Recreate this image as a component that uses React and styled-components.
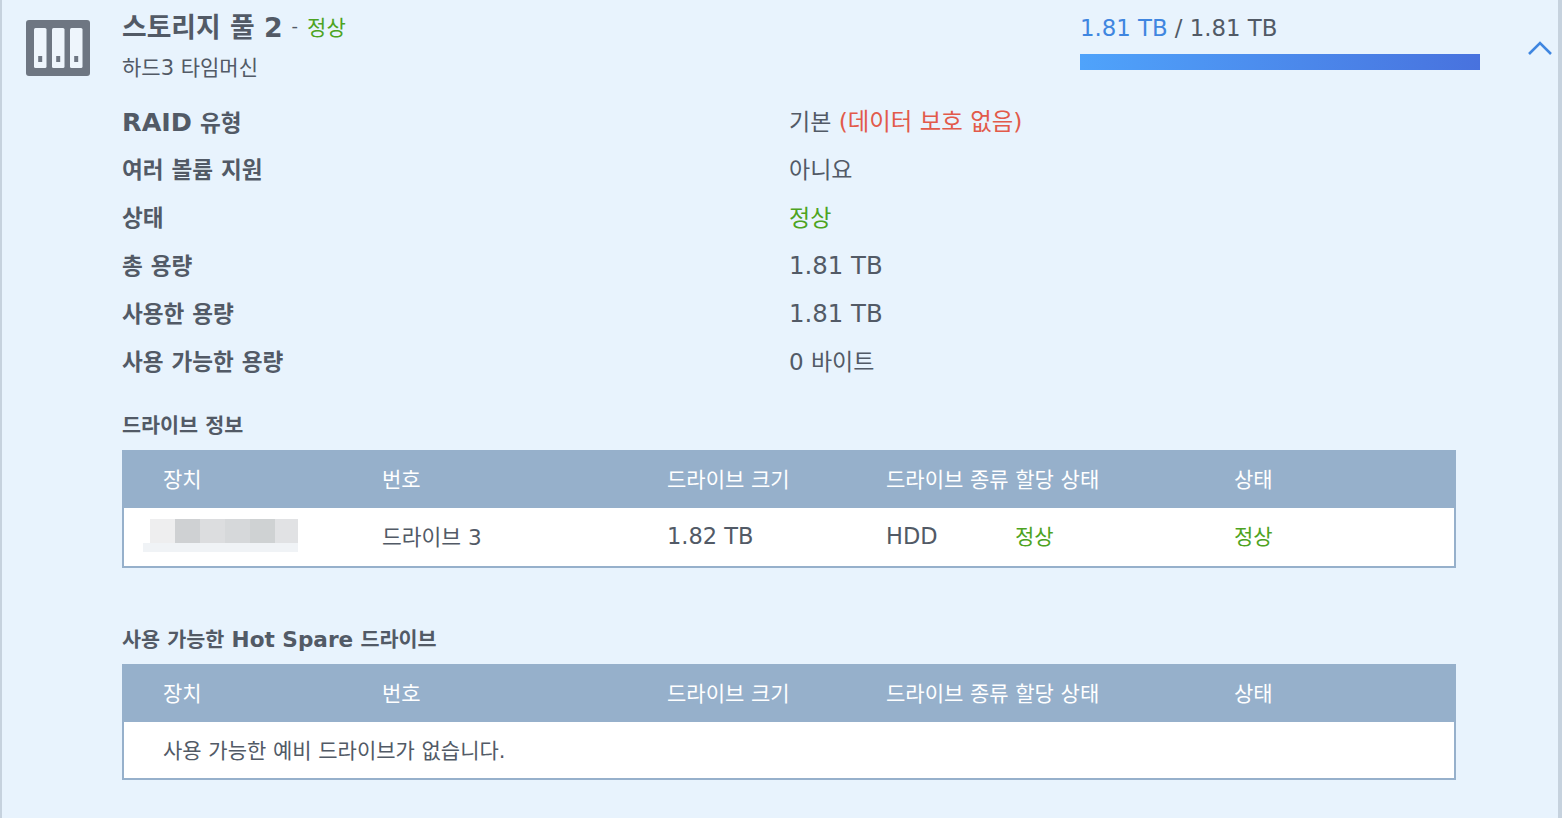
import React from "react";
import styled, { createGlobalStyle } from "styled-components";

const GlobalStyle = createGlobalStyle`
  html, body {
    margin: 0;
    padding: 0;
    background: #e8f3fd;
  }
  body {
    font-family: "DejaVu Sans", "Noto Sans CJK KR", sans-serif;
    color: #525a66;
    overflow: hidden;
  }
`;

const Panel = styled.div`
  box-sizing: border-box;
  height: 818px;
  background: #e8f3fd;
  border-left: 2px solid #c6d2de;
  border-right: 4px solid #c6d2de;
  display: grid;
  grid-template-columns: 120px 1fr;
  overflow: hidden;
`;

const IconCol = styled.div`
  padding: 20px 0 0 24px;
`;

const Body = styled.div`
  display: flex;
  flex-direction: column;
  width: 1334px;
`;

const Head = styled.div`
  display: grid;
  grid-template-columns: 958px 400px;
  height: 98px;
`;

const TitleLine = styled.div`
  display: flex;
  align-items: center;
  height: 27px;
  margin-top: 12px;
  font-size: 18px;
`;

const Title = styled.span`
  font-size: 26.8px;
  font-weight: 700;
  margin-right: 9px;
`;

const Green = styled.span`
  color: #4da321;
  font-size: ${(p) => p.$size || 23}px;
`;

const TitleStatus = styled(Green)`
  margin-left: 9px;
`;

const RowStatus = styled(Green)`
  margin-bottom: 2px;
`;

const Sub = styled.div`
  font-size: 21px;
  height: 28px;
  line-height: 28px;
  margin-top: 15px;
`;

const Usage = styled.div`
  position: relative;
  font-size: 22.8px;
  padding-top: 14px;
  line-height: 28px;
`;

const Used = styled.span`
  color: #3f86e0;
`;

const Bar = styled.div`
  width: 400px;
  height: 16px;
  margin-top: 12px;
  background: linear-gradient(90deg, #4fa3fb, #4872de);
`;

const Chevron = styled.svg`
  position: absolute;
  left: 447px;
  top: 40px;
`;

const InfoRow = styled.div`
  display: grid;
  grid-template-columns: 667px 1fr;
  height: 48px;
  line-height: 48px;
  font-size: 23px;
`;

const Label = styled.div`
  font-size: 22.6px;
  font-weight: 700;
`;

const RaidWord = styled.span`
  font-size: 25.5px;
`;

const Amount = styled.div`
  font-size: 24.4px;
`;

const Red = styled.span`
  color: #e25a4a;
  font-size: 23.4px;
`;

const Heading = styled.div`
  font-size: 20.7px;
  font-weight: 700;
  height: 28px;
  line-height: 28px;
  margin-top: ${(p) => p.$top}px;
  margin-bottom: 10px;
`;

const HeadingLatin = styled.span`
  font-size: 21.6px;
`;

const Table = styled.div`
  box-sizing: border-box;
  border: 2px solid #96b0cb;
  background: #fff;
  width: 1334px;
`;

const Row = styled.div`
  display: grid;
  grid-template-columns: 219px 285px 219px 129px 219px 1fr;
  align-items: center;
  box-sizing: border-box;
  padding-left: 39px;
  padding-bottom: 2px;
  height: ${(p) => p.$h}px;
  font-size: 22.5px;
`;

const HeadRow = styled(Row)`
  background: #96b0cb;
  color: #fff;
  margin: -2px -2px 0;
  padding-left: 41px;
  font-size: 21px;
  grid-template-columns: 219px 285px 219px 348px 1fr;
`;

const DriveName = styled.div`
  font-size: 21.5px;
  margin-bottom: 2px;
`;

const Empty = styled.div`
  font-size: 21px;
  grid-column: 1 / -1;
`;

const Blur = styled.div`
  position: relative;
  display: flex;
  width: 148px;
  height: 24px;
  margin-left: -13px;
  margin-top: -11px;
  &::after {
    content: "";
    position: absolute;
    left: -7px;
    right: 0;
    top: 24px;
    height: 9px;
    background: #f0f3f6;
  }
`;

const BlurCell = styled.div`
  flex: ${(p) => p.$w} 0 0;
  background: ${(p) => p.$c};
`;

const columns = ["장치", "번호", "드라이브 크기", "드라이브 종류 할당 상태", "상태"];

const blurCells = [
  [25, "#eeeeef"],
  [25, "#cfd1d3"],
  [25, "#dcdddf"],
  [25, "#d6d8da"],
  [25, "#cfd2d3"],
  [23, "#e1e2e4"],
];

const DriveHead = () => (
  <HeadRow $h={58}>
    {columns.map((c) => (
      <div key={c}>{c}</div>
    ))}
  </HeadRow>
);

export default function App() {
  return (
    <>
      <GlobalStyle />
      <Panel>
        <IconCol>
          <svg width="64" height="56" viewBox="0 0 64 56">
            <rect width="64" height="56" rx="3" fill="#6e7682" />
            <rect x="8" y="8" width="12.5" height="40" rx="1.5" fill="#eef5fc" />
            <rect x="26" y="8" width="12.5" height="40" rx="1.5" fill="#eef5fc" />
            <rect x="44" y="8" width="12.5" height="40" rx="1.5" fill="#eef5fc" />
            <rect x="12.2" y="36" width="4" height="6" fill="#6e7682" />
            <rect x="30.2" y="36" width="4" height="6" fill="#6e7682" />
            <rect x="48.2" y="36" width="4" height="6" fill="#6e7682" />
          </svg>
        </IconCol>
        <Body>
          <Head>
            <div>
              <TitleLine>
                <Title>스토리지 풀 2</Title>-
                <TitleStatus $size={21}>정상</TitleStatus>
              </TitleLine>
              <Sub>하드3 타임머신</Sub>
            </div>
            <Usage>
              <Used>1.81 TB</Used> / 1.81 TB
              <Bar />
              <Chevron width="26" height="16" viewBox="0 0 26 16">
                <path d="M2 14 L13 3 L24 14" fill="none" stroke="#3f86e0" strokeWidth="2.6" />
              </Chevron>
            </Usage>
          </Head>
          <InfoRow>
            <Label>
              <RaidWord>RAID</RaidWord> 유형
            </Label>
            <div>
              기본 <Red>(데이터 보호 없음)</Red>
            </div>
          </InfoRow>
          <InfoRow>
            <Label>여러 볼륨 지원</Label>
            <div>아니요</div>
          </InfoRow>
          <InfoRow>
            <Label>상태</Label>
            <Green>정상</Green>
          </InfoRow>
          <InfoRow>
            <Label>총 용량</Label>
            <Amount>1.81 TB</Amount>
          </InfoRow>
          <InfoRow>
            <Label>사용한 용량</Label>
            <Amount>1.81 TB</Amount>
          </InfoRow>
          <InfoRow>
            <Label>사용 가능한 용량</Label>
            <div>0 바이트</div>
          </InfoRow>

          <Heading $top={26}>드라이브 정보</Heading>
          <Table>
            <DriveHead />
            <Row $h={58}>
              <Blur>
                {blurCells.map(([w, c], i) => (
                  <BlurCell key={i} $w={w} $c={c} />
                ))}
              </Blur>
              <DriveName>드라이브 3</DriveName>
              <div>1.82 TB</div>
              <div>HDD</div>
              <RowStatus $size={21}>정상</RowStatus>
              <RowStatus $size={21}>정상</RowStatus>
            </Row>
          </Table>

          <Heading $top={58}>
            사용 가능한 <HeadingLatin>Hot Spare</HeadingLatin> 드라이브
          </Heading>
          <Table>
            <DriveHead />
            <Row $h={56}>
              <Empty>사용 가능한 예비 드라이브가 없습니다.</Empty>
            </Row>
          </Table>
        </Body>
      </Panel>
    </>
  );
}
